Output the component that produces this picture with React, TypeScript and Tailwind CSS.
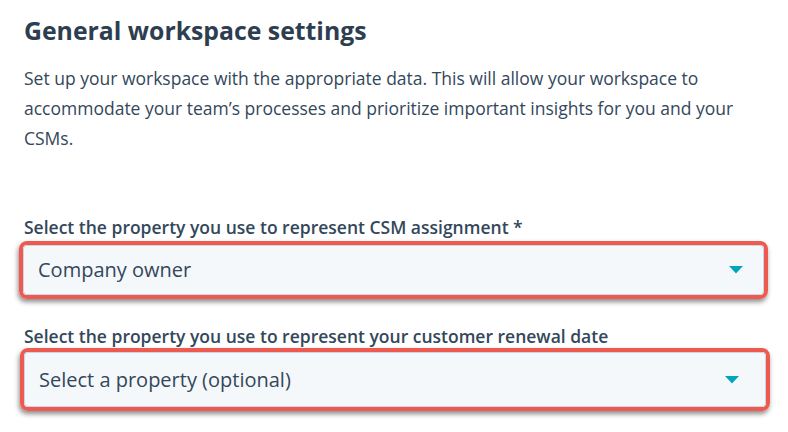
import React from "react";

function Caret() {
  return (
    <svg width="14" height="8" viewBox="0 0 14 8" className="shrink-0">
      <path d="M0 0 L14 0 L7 7.5 Z" fill="#00a4bd" />
    </svg>
  );
}

function Select({ text, h, right }: { text: string; h: string; right: string }) {
  return (
    <div
      className={`rounded-[8px] border-[4px] border-[#ef5a50] shadow-[-1px_3px_5px_rgba(0,0,0,0.45)] ${h}`}
    >
      <div className="flex h-full items-center justify-between rounded-[4px] border border-[#cbd6e2] bg-[#f5f8fa] pl-[14px]">
        <span className="text-[20px] text-[#33475b]">{text}</span>
        <div className={right}>
          <Caret />
        </div>
      </div>
    </div>
  );
}

export default function App() {
  return (
    <div
      className="h-[432px] w-[788px] overflow-hidden bg-white pl-[24px] pr-[20px] pt-[13px] text-[#33475b]"
      style={{ fontFamily: '"Open Sans", sans-serif' }}
    >
      <h1 className="text-[24.8px] font-bold leading-[34px] text-[#2d3e50]">
        General workspace settings
      </h1>
      <p className="mt-[16px] w-[740px] text-[17.5px] leading-[30px]">
        Set up your workspace with the appropriate data. This will allow your workspace to
        accommodate your team’s processes and prioritize important insights for you and your
        CSMs.
      </p>
      <div className="mt-[63px] text-[17.5px] font-semibold leading-[22px]">
        Select the property you use to represent CSM assignment *
      </div>
      <div className="ml-[-5px] mr-0 mt-[3px]">
        <Select text="Company owner" h="h-[58px]" right="pr-[20px]" />
      </div>
      <div className="mt-[26px] text-[17.5px] font-semibold leading-[22px]">
        Select the property you use to represent your customer renewal date
      </div>
      <div className="ml-[-4px] mr-[-2px] mt-[1px]">
        <Select text="Select a property (optional)" h="h-[63px]" right="pr-[26px]" />
      </div>
    </div>
  );
}
